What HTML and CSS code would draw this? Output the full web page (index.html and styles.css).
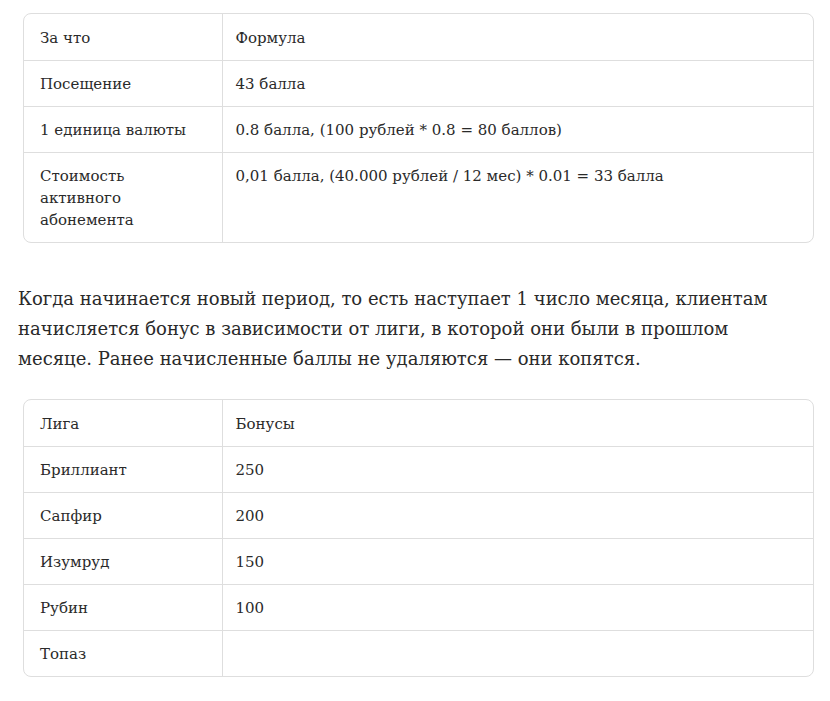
FILE: index.html
```
<!DOCTYPE html>
<html lang="ru">
<head>
  <meta charset="UTF-8" />
  <meta name="viewport" content="width=device-width, initial-scale=1.0" />
  <title>Баллы и лиги</title>
  <link rel="stylesheet" href="styles.css">
</head>
<body>
  <div class="article">
    <div class="table-wrap">
      <table>
        <tr><td class="first">За что</td><td>Формула</td></tr>
        <tr><td class="first">Посещение</td><td>43 балла</td></tr>
        <tr><td class="first">1 единица валюты</td><td>0.8 балла, (100 рублей * 0.8 = 80 баллов)</td></tr>
        <tr><td class="first">Стоимость активного абонемента</td><td>0,01 балла, (40.000 рублей / 12 мес) * 0.01 = 33 балла</td></tr>
      </table>
    </div>

    <p class="text">Когда начинается новый период, то есть наступает 1 число месяца, клиентам начисляется бонус в зависимости от лиги, в которой они были в прошлом месяце. Ранее начисленные баллы не удаляются — они копятся.</p>

    <div class="table-wrap">
      <table>
        <tr><td class="first">Лига</td><td>Бонусы</td></tr>
        <tr><td class="first">Бриллиант</td><td>250</td></tr>
        <tr><td class="first">Сапфир</td><td>200</td></tr>
        <tr><td class="first">Изумруд</td><td>150</td></tr>
        <tr><td class="first">Рубин</td><td>100</td></tr>
        <tr><td class="first">Топаз</td><td></td></tr>
      </table>
    </div>
  </div>
</body>
</html>
```

FILE: styles.css
```
:root {
  --text: #2a2a2a;
  --line: #dedede;
}

* {
  box-sizing: border-box;
  margin: 0;
  padding: 0;
}

body {
  background: #ffffff;
  color: var(--text);
  font-family: "DejaVu Serif", serif;
}

.article {
  padding: 13px 16px 0 18px;
}

.table-wrap {
  margin-left: 5px;
  border: 1px solid var(--line);
  border-radius: 8px;
  overflow: hidden;
}

table {
  width: 100%;
  border-collapse: collapse;
  font-size: 15px;
  line-height: 22px;
}

td {
  padding: 12px 16px 11px 13px;
  vertical-align: top;
  border-top: 1px solid var(--line);
}

tr:first-child td {
  padding-top: 13px;
  border-top: none;
}

td.first {
  width: 198px;
  padding-left: 16px;
  border-right: 1px solid var(--line);
}

.text {
  max-width: 775px;
  font-size: 18px;
  line-height: 30px;
  margin: 41px 0 25px;
}
```
